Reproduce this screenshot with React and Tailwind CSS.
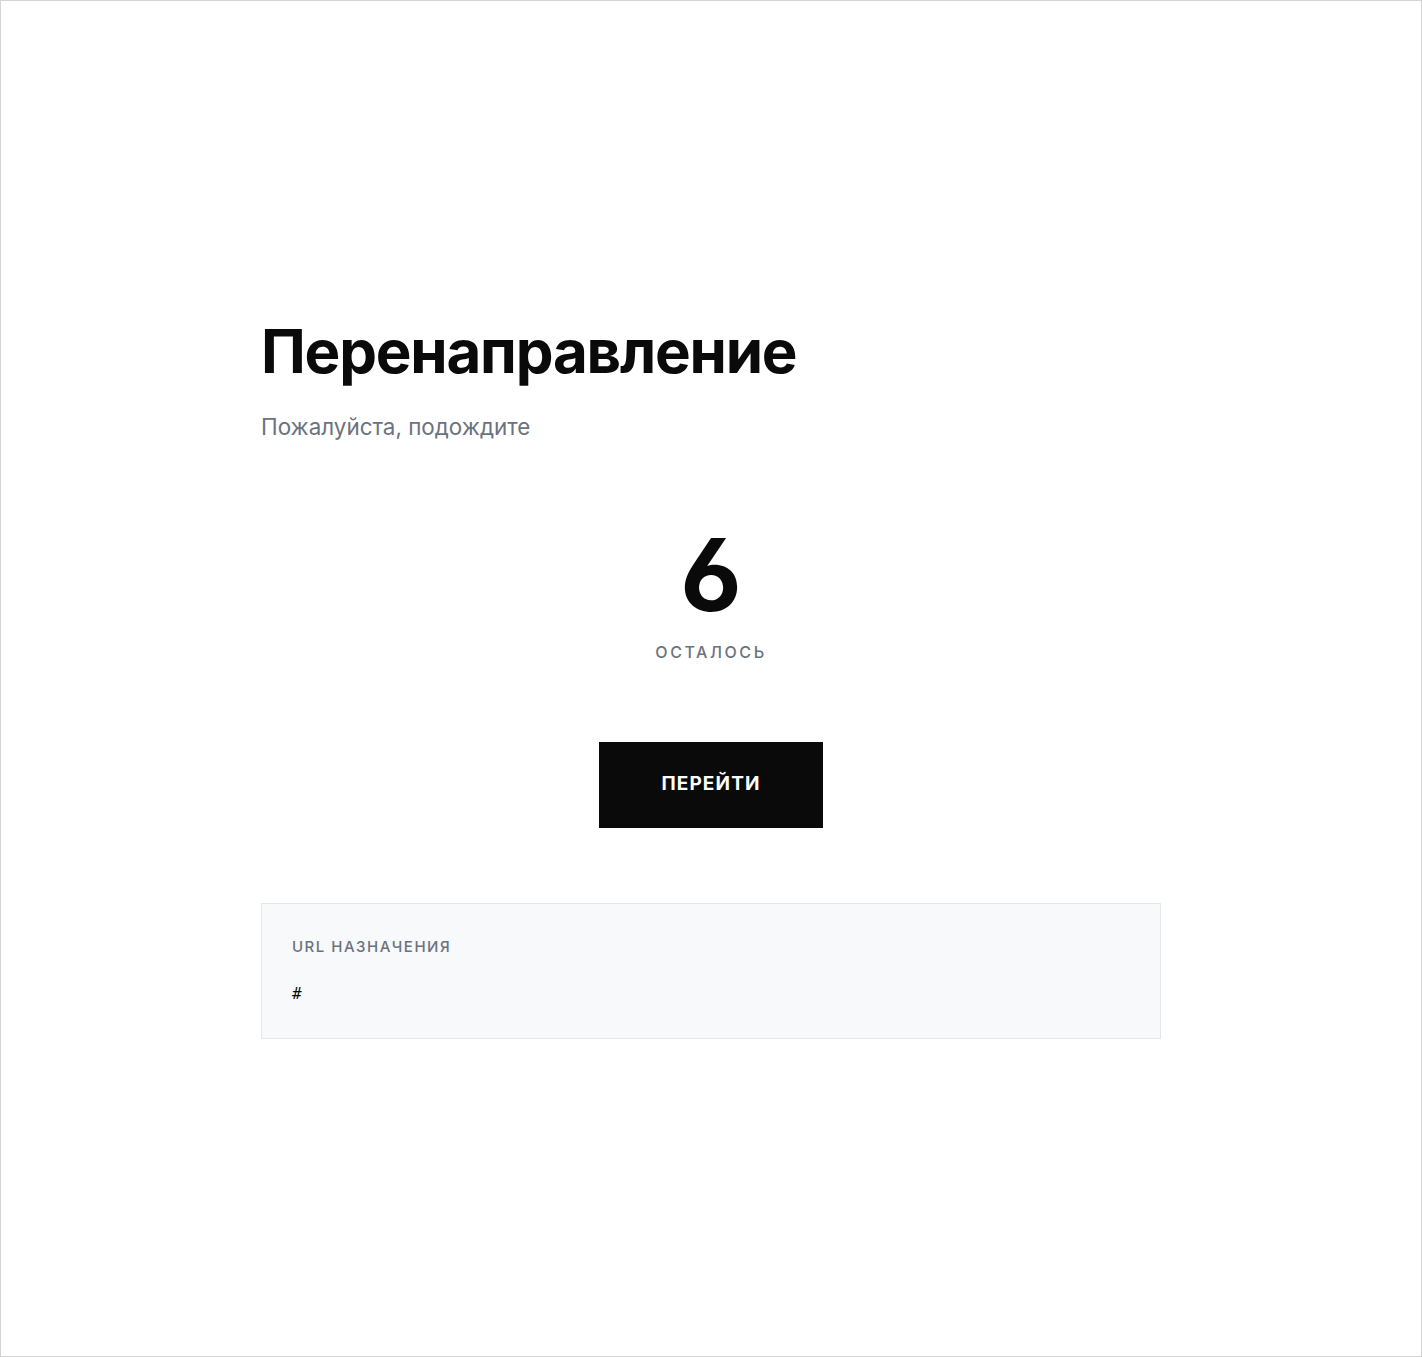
export default function App() {
  return (
    <div
      className="min-h-screen h-[1357px] border border-[#d4d4d4] bg-white flex items-center justify-center"
      style={{ fontFamily: "Inter, 'Noto Sans', sans-serif" }}
    >
      <div className="w-[900px]">
        <h1 className="text-[60px] leading-[1.1] font-bold tracking-[-0.02em] text-[#0a0a0a]">
          Перенаправление
        </h1>
        <p className="mt-[26px] text-[22.4px] text-[#6b7280]">Пожалуйста, подождите</p>

        <div className="mt-[81px] flex flex-col items-center">
          <div className="text-[100px] leading-none font-bold text-[#0a0a0a] [font-feature-settings:'ss01']">
            6
          </div>
          <div className="mt-[15px] text-[16px] font-medium tracking-[0.16em] text-[#6b7280]">
            ОСТАЛОСЬ
          </div>
          <button className="mt-[78px] w-[224px] h-[86px] bg-[#0a0a0a] text-white text-[19px] font-bold tracking-[0.06em]">
            ПЕРЕЙТИ
          </button>
        </div>

        <div className="mt-[75px] bg-[#f8f9fa] border border-[#e5e7eb] px-[30px] pt-[32px] pb-[32px]">
          <div className="text-[15px] font-medium tracking-[0.1em] text-[#6b7280]">
            URL НАЗНАЧЕНИЯ
          </div>
          <div
            className="mt-[24px] text-[16px] text-[#0a0a0a]"
            style={{ fontFamily: "'DejaVu Sans Mono', monospace" }}
          >
            #
          </div>
        </div>
      </div>
    </div>
  );
}
